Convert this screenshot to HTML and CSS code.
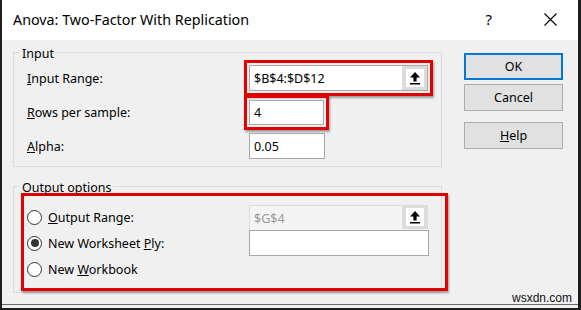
FILE: index.html
```html
<!DOCTYPE html>
<html lang="en">
<head>
    <meta charset="UTF-8">
    <title>Anova: Two-Factor With Replication</title>
    <link rel="stylesheet" href="styles.css">
</head>
<body>
    <div class="dialog">
        <div class="titlebar">
            <span class="title">Anova: Two-Factor With Replication</span>
            <span class="title-help">?</span>
            <svg class="title-close" width="13" height="13" viewBox="0 0 13 13">
                <path d="M0.5 0.5 L12.5 12.5 M12.5 0.5 L0.5 12.5" stroke="#000" stroke-width="1.1" fill="none"/>
            </svg>
        </div>

        <div class="content">
            <div class="groups">
                <fieldset class="group group-input">
                    <legend>Input</legend>
                    <div class="row">
                        <label class="label"><u>I</u>nput Range:</label>
                        <div class="mark">
                            <div class="refedit">
                                <span class="field field-range">$B$4:$D$12</span>
                                <span class="collapse">
                                    <svg width="12" height="14" viewBox="0 0 12 14"><path d="M6 1 L11 6.5 H7.6 V10.5 H4.4 V6.5 H1 Z M1 12 H11 V13.6 H1 Z" fill="#000"/></svg>
                                </span>
                            </div>
                        </div>
                    </div>
                    <div class="row">
                        <label class="label"><u>R</u>ows per sample:</label>
                        <div class="mark">
                            <span class="field field-small">4</span>
                        </div>
                    </div>
                    <div class="row">
                        <label class="label"><u>A</u>lpha:</label>
                        <span class="field field-small">0.05</span>
                    </div>
                </fieldset>

                <fieldset class="group group-output">
                    <legend>Output options</legend>
                    <div class="mark mark-output">
                        <div class="row row-radio">
                            <span class="radio"></span>
                            <label class="label label-radio"><u>O</u>utput Range:</label>
                            <div class="refedit refedit-disabled">
                                <span class="field field-range field-disabled">$G$4</span>
                                <span class="collapse">
                                    <svg width="12" height="14" viewBox="0 0 12 14"><path d="M6 1 L11 6.5 H7.6 V10.5 H4.4 V6.5 H1 Z M1 12 H11 V13.6 H1 Z" fill="#000"/></svg>
                                </span>
                            </div>
                        </div>
                        <div class="row row-radio">
                            <span class="radio radio-checked"></span>
                            <label class="label label-radio">New Worksheet <u>P</u>ly:</label>
                            <span class="field field-wide"></span>
                        </div>
                        <div class="row row-radio">
                            <span class="radio"></span>
                            <label class="label label-radio">New <u>W</u>orkbook</label>
                        </div>
                    </div>
                </fieldset>
            </div>

            <div class="buttons">
                <button class="btn btn-default">OK</button>
                <button class="btn">Cancel</button>
                <button class="btn btn-help"><u>H</u>elp</button>
            </div>
        </div>

        <div class="watermark">wsxdn.com</div>
    </div>
</body>
</html>
```

FILE: styles.css
```css
body {
    margin: 0;
    background: #fff;
    font-family: 'Noto Sans', sans-serif;
    color: #000;
}

.dialog {
    position: relative;
    width: 581px;
    height: 310px;
    box-sizing: border-box;
    background: #f0f0f0;
    border-left: 2px solid #1e1e1e;
    border-right: 3px solid #1e1e1e;
    border-bottom: 2px solid #1e1e1e;
    box-shadow: inset 0 -3px 0 #f0f0f0, inset 0 -4px 0 #6a6a6a;
}

.titlebar {
    height: 40px;
    background: #fff;
    display: flex;
    align-items: center;
    padding-left: 11px;
}

.title {
    font-size: 14.3px;
    flex: 1;
    padding-bottom: 1px;
}

.title-help {
    font-size: 15px;
    margin-right: 52px;
    padding-bottom: 2px;
}

.title-close {
    margin-right: 21px;
    margin-bottom: 1px;
}

.content {
    display: flex;
    padding: 6px 0 0 11px;
}

.groups {
    width: 429px;
}

.group {
    margin: 0;
    border: 1px solid #dcdcdc;
    font-size: 12.5px;
    padding: 2px 0 0 6px;
    box-sizing: border-box;
}

.group legend {
    padding: 0 2px;
    line-height: 13px;
    font-size: 12.5px;
    position: relative;
    top: 1px;
}

.group-input {
    height: 121px;
}

.group-input .row {
    padding-left: 7px;
}

.group-output {
    margin-top: 13px;
    height: 113px;
    padding-top: 0;
}

.row {
    display: flex;
    align-items: center;
    height: 34px;
}

.label {
    width: 222px;
    flex: none;
}

.mark {
    border: 3px solid #e20000;
    padding: 2px;
    margin: -5px;
    box-shadow: 1px 2px 2px rgba(0, 0, 0, 0.35);
}

.refedit {
    display: flex;
    background: #fff;
    border: 1px solid #a8a8a8;
    height: 26px;
    box-sizing: border-box;
}

.field {
    display: flex;
    align-items: center;
    box-sizing: border-box;
    padding-left: 4px;
    background: #fff;
    font-size: 12.5px;
    height: 26px;
}

.refedit .field {
    height: 24px;
}

.field-range {
    width: 152px;
}

.field-small {
    width: 76px;
    border: 1px solid #a8a8a8;
}

.mark .field-small {
    width: 75px;
    height: 25px;
}

.collapse {
    width: 25px;
    display: flex;
    align-items: center;
    justify-content: center;
    background: #dcdcdc;
}

.collapse svg {
    background: #fff;
    padding: 2px 3px;
}

.mark-output {
    margin: 0 -7px 0 1px;
    padding: 8px 0 0 3px;
    height: 98px;
    box-sizing: border-box;
}

.row-radio {
    height: 26px;
}

.radio {
    width: 15px;
    height: 15px;
    box-sizing: border-box;
    border: 1px solid #333;
    border-radius: 50%;
    background: #fff;
    margin-right: 6px;
    display: flex;
    align-items: center;
    justify-content: center;
}

.radio-checked::after {
    content: '';
    width: 8px;
    height: 8px;
    border-radius: 50%;
    background: #333;
}

.label-radio {
    width: 201px;
}

.refedit-disabled {
    border-color: #dcdcdc;
    background: #f4f4f4;
    height: 24px;
}

.field-disabled {
    background: #f4f4f4;
    color: #9a9a9a;
    width: 152px;
}

.field-wide {
    width: 180px;
    border: 1px solid #a8a8a8;
}

.buttons {
    display: flex;
    flex-direction: column;
    margin-left: 22px;
    padding-top: 7px;
}

.btn {
    width: 99px;
    height: 27px;
    margin-bottom: 4px;
    background: #e1e1e1;
    border: 1px solid #adadad;
    font-family: 'Noto Sans', sans-serif;
    font-size: 12.5px;
    color: #000;
    padding: 0;
}

.btn-default {
    border: 2px solid #0078d7;
}

.btn-help {
    margin-top: 7px;
}

.watermark {
    position: absolute;
    right: 6px;
    bottom: 3px;
    font-family: 'Liberation Sans', sans-serif;
    font-size: 12px;
    color: #111;
}
```
